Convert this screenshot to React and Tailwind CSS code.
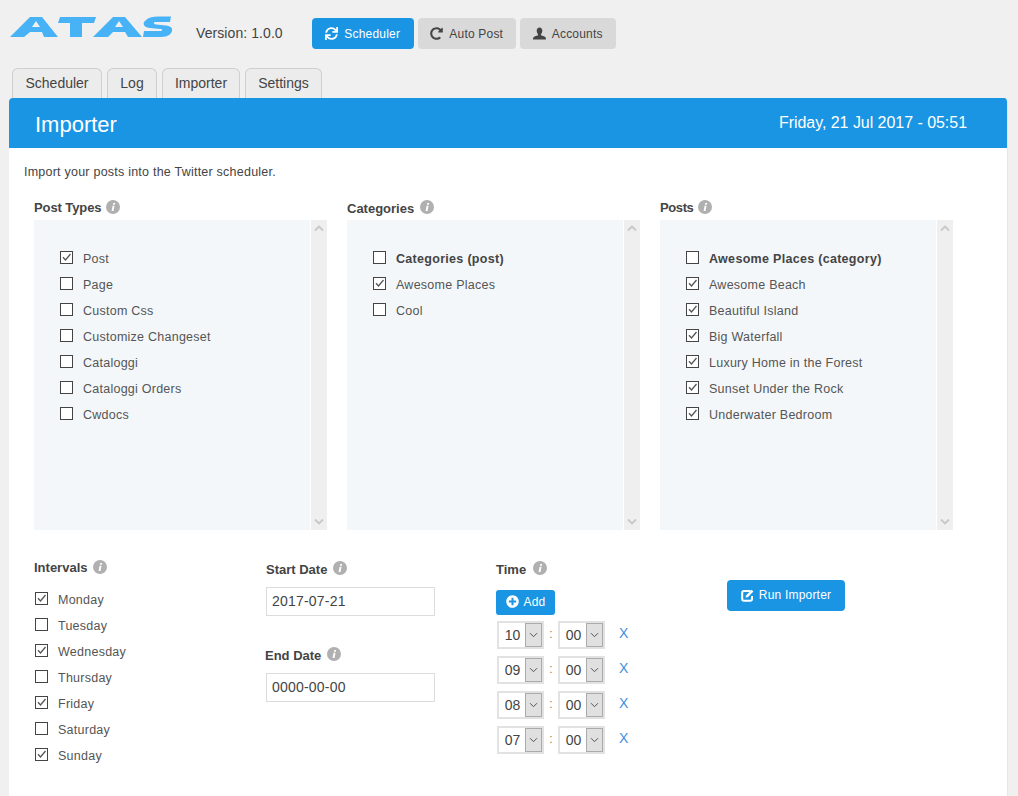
import React from "react";
import { FaSync, FaRedoAlt, FaPlusCircle } from "react-icons/fa";

function Logo() {
  return (
    <svg width="162" height="22" viewBox="10 16 162 22" className="block" fill="#48b2f7">
      <path fillRule="evenodd" d="M10 37L30 17H42L58 37H44L42 32H30L24 37ZM36 21L32 27H40Z" />
      <path d="M60 17H96L94 23H82V37H70V23H58Z" />
      <path fillRule="evenodd" d="M93 37L113 17H125L142 37H128L125 32H113L108 37ZM119 21L115 27H123Z" />
      <path d="M171 16.5L170 22H156C153 22 153 24 156 24.5L166 25.5C173 26.5 173 30 171 33C169 36 165 37 160 37H143L144 31H160C163 31 163 29 160 29L150 28C143 27 142 23 146 20C149 17 153 16.5 158 16.5Z" />
    </svg>
  );
}

function UserIcon() {
  return (
    <svg width="13" height="13" viewBox="0 0 13 13" className="block">
      <path d="M6.5 0.5C8.3 0.5 9.3 2 9.3 3.8C9.3 5.3 8.6 6.5 8 7.2V8.2L11.5 9.6C12.4 10 13 10.8 13 12.5H0C0 10.8 0.6 10 1.5 9.6L5 8.2V7.2C4.4 6.5 3.7 5.3 3.7 3.8C3.7 2 4.7 0.5 6.5 0.5Z" fill="#444" />
    </svg>
  );
}

function EditIcon() {
  return (
    <svg width="13" height="13" viewBox="0 0 13 13" className="mr-[5px] block">
      <path d="M9.5 2H3C1.9 2 1.2 2.7 1.2 3.8V10C1.2 11.1 1.9 11.8 3 11.8H9.2C10.3 11.8 11 11.1 11 10V7" fill="none" stroke="#fff" strokeWidth="2" />
      <path d="M4.6 8.6L5 6.4L10.6 0.8L12.4 2.6L6.8 8.2Z" fill="#fff" />
    </svg>
  );
}

function Info({ className = "ml-[6px] relative -top-[1px]" }) {
  return (
    <svg width="14" height="14" viewBox="0 0 14 14" className={`shrink-0 ${className}`}>
      <circle cx="7" cy="7" r="7" fill="#b0b0b0" />
      <path d="M7.3 3h1.9l-.4 1.7H6.9zM6.6 5.8h1.9L7.5 11H5.6z" fill="#fff" />
    </svg>
  );
}

function Label({ children, className = "", textClass = "", iconClass }) {
  return (
    <div className={`flex items-center h-[16px] text-[13px] font-bold text-[#444] ${className}`}>
      <span className={textClass}>{children}</span>
      <Info className={iconClass} />
    </div>
  );
}

function Check({ on, text, bold }) {
  return (
    <div className="flex items-center h-[26px]">
      <div className="relative -top-[1px] w-[13px] h-[13px] shrink-0 border border-[#444] bg-white">
        {on && (
          <svg width="11" height="11" viewBox="0 0 11 11" className="absolute left-0 top-0">
            <path d="M2 5.2L4.5 8L9.5 2" fill="none" stroke="#555" strokeWidth="1.3" />
          </svg>
        )}
      </div>
      <span className={`relative top-[1px] ml-[10px] text-[12.5px] ${bold ? "font-bold text-[#444] tracking-[0.3px]" : "text-[#555] tracking-[0.25px]"}`}>{text}</span>
    </div>
  );
}

function Chevron({ up, className = "" }) {
  return (
    <svg width="10" height="7" viewBox="0 0 10 7" className={className}>
      <path d={up ? "M1 5.5L5 1.5L9 5.5" : "M1 1.5L5 5.5L9 1.5"} fill="none" stroke="#c8c8c8" strokeWidth="1.8" />
    </svg>
  );
}

function ListBox({ title, items, last, textClass, iconClass }) {
  return (
    <div className={`w-[293px] shrink-0 ${last ? "" : "mr-[20px]"}`}>
      <Label className="mb-[4px]" textClass={textClass} iconClass={iconClass}>{title}</Label>
      <div className="flex h-[310px]">
        <div className="flex-1 bg-[#f3f7fa] pl-[26px] pt-[25px]">
          {items.map((it) => (
            <Check key={it[0]} text={it[0]} on={it[1]} bold={it[2]} />
          ))}
        </div>
        <div className="ml-[1px] w-[16px] bg-[#efefef] flex flex-col items-center justify-between py-[5px]">
          <Chevron up />
          <Chevron />
        </div>
      </div>
    </div>
  );
}

function Sel({ value }) {
  return (
    <div className="flex w-[47px] h-[28px] border-2 border-[#e2e2e2] bg-white">
      <div className="flex-1 flex items-center justify-center text-[14px] text-[#444] pl-[1px]">{value}</div>
      <div className="w-[17px] bg-[#e0e0e0] border border-[#ababab] flex items-center justify-center">
        <svg width="9" height="6" viewBox="0 0 9 6">
          <path d="M1 1.2L4.5 4.7L8 1.2" fill="none" stroke="#555" strokeWidth="1" />
        </svg>
      </div>
    </div>
  );
}

function TimeRow({ h }) {
  return (
    <div className="flex items-center h-[28px] mb-[7px] ml-[1px]">
      <Sel value={h} />
      <span className="relative -top-[1px] w-[14px] text-center text-[12px] text-[#a08050]">:</span>
      <Sel value="00" />
      <span className="ml-[14px] -mt-[3px] text-[14px] text-[#3f8fdf]">X</span>
    </div>
  );
}

function TopBtn({ active, icon, children, w }) {
  return (
    <div
      className={`flex items-center justify-center h-[31px] rounded-[4px] text-[12px] tracking-[0.2px] ${w} ${
        active ? "bg-[#1a95e3] text-white" : "bg-[#d9d9d9] text-[#444]"
      }`}
    >
      <span className="mr-[6px] text-[13px]">{icon}</span>
      {children}
    </div>
  );
}

function Tab({ children, w }) {
  return (
    <div className={`flex items-center justify-center h-[30px] bg-[#ececec] border border-b-0 border-[#cfcfcf] rounded-t-[6px] text-[14px] text-[#444] ${w}`}>
      {children}
    </div>
  );
}

const postTypes = [["Post", true], ["Page"], ["Custom Css"], ["Customize Changeset"], ["Cataloggi"], ["Cataloggi Orders"], ["Cwdocs"]];
const categories = [["Categories (post)", false, true], ["Awesome Places", true], ["Cool"]];
const posts = [
  ["Awesome Places (category)", false, true],
  ["Awesome Beach", true],
  ["Beautiful Island", true],
  ["Big Waterfall", true],
  ["Luxury Home in the Forest", true],
  ["Sunset Under the Rock", true],
  ["Underwater Bedroom", true],
];
const days = [["Monday", true], ["Tuesday"], ["Wednesday", true], ["Thursday"], ["Friday", true], ["Saturday"], ["Sunday", true]];

function DateField({ value }) {
  return (
    <div className="w-[169px] h-[29px] border border-[#dcdcdc] flex items-center pl-[5px] text-[14px] tracking-[0.2px] text-[#444] bg-white">
      {value}
    </div>
  );
}

export default function App() {
  return (
    <div className="h-[796px] overflow-hidden bg-[#f0f0f0] font-['Liberation_Sans',Arial,sans-serif]">
      <div className="flex h-[68px] pl-[10px]">
        <div className="pt-[16px]">
          <Logo />
        </div>
        <div className="ml-[24px] pt-[25px] text-[14px] leading-[16px] tracking-[0.08px] text-[#444]">Version: 1.0.0</div>
        <div className="ml-[29px] pt-[18px] flex gap-[4px]">
          <TopBtn active w="w-[102px]" icon={<FaSync />}>Scheduler</TopBtn>
          <TopBtn w="w-[98px]" icon={<FaRedoAlt />}>Auto Post</TopBtn>
          <TopBtn w="w-[96px]" icon={<UserIcon />}>Accounts</TopBtn>
        </div>
      </div>

      <div className="flex gap-[5px] pl-[12px] h-[30px]">
        <Tab w="w-[90px]">Scheduler</Tab>
        <Tab w="w-[50px]">Log</Tab>
        <Tab w="w-[78px]">Importer</Tab>
        <Tab w="w-[77px]">Settings</Tab>
      </div>

      <div className="ml-[9px] w-[999px] h-[698px] bg-white border-r border-[#e6e6e6] rounded-t-[4px] overflow-hidden">
        <div className="flex items-center justify-between h-[50px] bg-[#1a95e3] pl-[26px] pr-[40px] text-white">
          <span className="relative top-[1px] text-[22px]">Importer</span>
          <span className="text-[16px] tracking-[-0.04px]">Friday, 21 Jul 2017 - 05:51</span>
        </div>

        <div className="pl-[15px] pt-[17px] text-[12.5px] leading-[14px] tracking-[0.23px] text-[#444]">
          Import your posts into the Twitter scheduler.
        </div>

        <div className="flex pl-[25px] pt-[21px]">
          <ListBox title="Post Types" items={postTypes} textClass="tracking-[-0.1px]" iconClass="ml-[5px] relative -top-[1px]" />
          <ListBox title="Categories" items={categories} textClass="relative top-[1px]" />
          <ListBox title="Posts" items={posts} last textClass="tracking-[-0.4px]" iconClass="ml-[5px] relative -top-[1px]" />
        </div>

        <div className="flex pl-[25px] pt-[30px]">
          <div className="w-[232px] shrink-0">
            <Label className="mb-[10px]">Intervals</Label>
            <div className="pl-[1px]">
              {days.map((d) => (
                <Check key={d[0]} text={d[0]} on={d[1]} />
              ))}
            </div>
          </div>

          <div className="w-[230px] shrink-0 pt-[2px]">
            <Label className="mb-[9px]" iconClass="ml-[6px] relative -top-[2px]">Start Date</Label>
            <DateField value="2017-07-21" />
            <Label className="mt-[32px] mb-[9px] -ml-[1px]" iconClass="ml-[6px] relative -top-[2px]">End Date</Label>
            <DateField value="0000-00-00" />
          </div>

          <div className="w-[231px] shrink-0 pt-[2px]">
            <Label className="mb-[12px]" iconClass="ml-[7px] relative -top-[2px]">Time</Label>
            <div className="flex items-center justify-center w-[59px] h-[25px] mb-[6px] rounded-[3px] bg-[#1a95e3] text-white text-[12px] tracking-[0.2px]">
              <FaPlusCircle className="mr-[5px] text-[13px] relative -top-[1px]" />
              <span className="relative -top-[1px]">Add</span>
            </div>
            <TimeRow h="10" />
            <TimeRow h="09" />
            <TimeRow h="08" />
            <TimeRow h="07" />
          </div>

          <div className="pt-[20px]">
            <div className="flex items-center justify-center w-[118px] h-[31px] rounded-[4px] bg-[#1a95e3] text-white text-[12px] tracking-[0.2px]">
              <EditIcon />
              <span className="relative -top-[1px]">Run Importer</span>
            </div>
          </div>
        </div>
      </div>
    </div>
  );
}
